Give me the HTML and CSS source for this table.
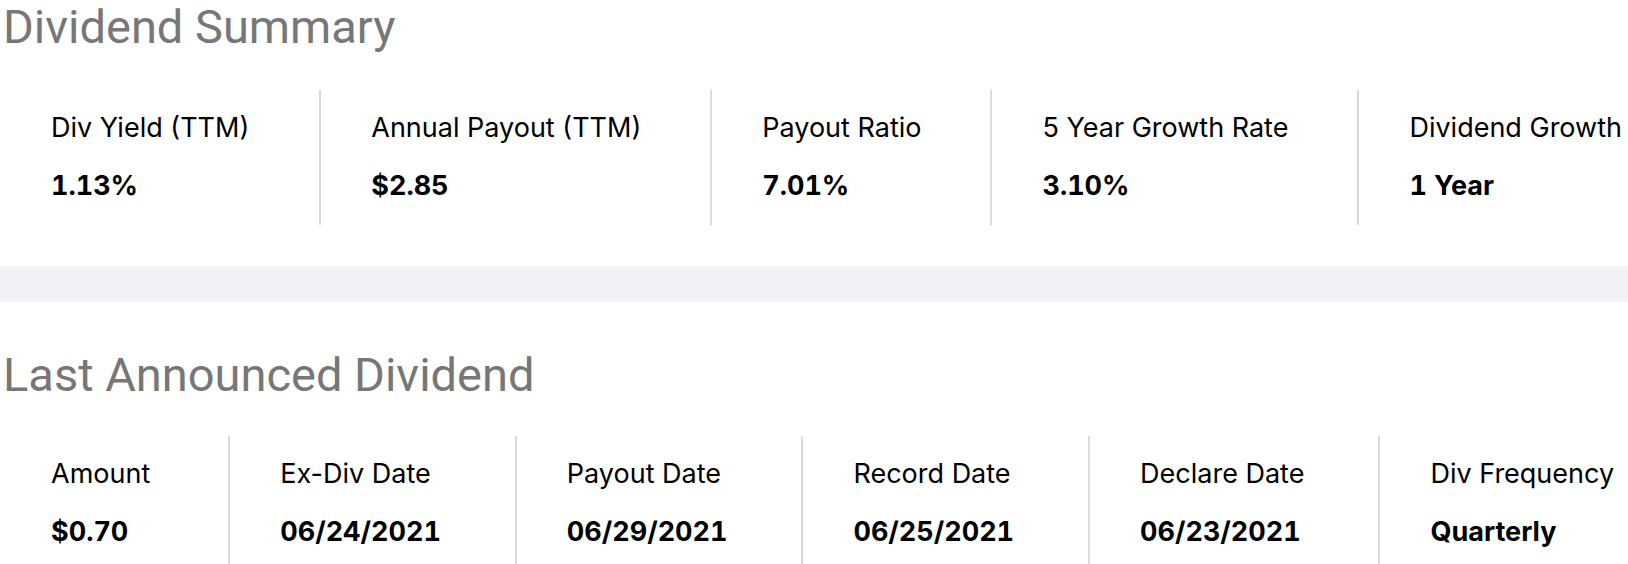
FILE: index.html
```html
<!DOCTYPE html>
<html lang="en">
<head>
<meta charset="utf-8">
<title>Dividend Summary</title>
<link rel="stylesheet" href="styles.css">
</head>
<body>
<section class="section">
  <h2 class="section-title">Dividend Summary</h2>
  <div class="stats stats-summary">
    <div class="stat"><div class="stat-label">Div Yield (TTM)</div><div class="stat-value">1.13%</div></div>
    <div class="stat"><div class="stat-label">Annual Payout (TTM)</div><div class="stat-value">$2.85</div></div>
    <div class="stat"><div class="stat-label">Payout Ratio</div><div class="stat-value">7.01%</div></div>
    <div class="stat"><div class="stat-label">5 Year Growth Rate</div><div class="stat-value">3.10%</div></div>
    <div class="stat"><div class="stat-label">Dividend Growth</div><div class="stat-value">1 Year</div></div>
  </div>
</section>
<div class="band"></div>
<section class="section section-last">
  <h2 class="section-title">Last Announced Dividend</h2>
  <div class="stats stats-last">
    <div class="stat"><div class="stat-label">Amount</div><div class="stat-value">$0.70</div></div>
    <div class="stat"><div class="stat-label">Ex-Div Date</div><div class="stat-value">06/24/2021</div></div>
    <div class="stat"><div class="stat-label">Payout Date</div><div class="stat-value">06/29/2021</div></div>
    <div class="stat"><div class="stat-label">Record Date</div><div class="stat-value">06/25/2021</div></div>
    <div class="stat"><div class="stat-label">Declare Date</div><div class="stat-value">06/23/2021</div></div>
    <div class="stat"><div class="stat-label">Div Frequency</div><div class="stat-value">Quarterly</div></div>
  </div>
</section>
</body>
</html>
```
FILE: styles.css
```css
html, body {
  margin: 0;
  padding: 0;
  background: #ffffff;
}
body {
  font-family: Inter, "Noto Sans", sans-serif;
  color: #000000;
  overflow: hidden;
}
.section-title {
  margin: 0;
  padding-left: 3px;
  font-family: Roboto, "Liberation Sans", sans-serif;
  font-weight: 400;
  font-size: 47px;
  line-height: 54px;
  color: #777777;
}
.stats {
  display: flex;
  margin-top: 36px;
}
.stats-last {
  margin-top: 34px;
}
.stat {
  padding: 22px 69px 23px 50px;
  border-left: 2px solid #dadada;
}
.stat:first-child {
  border-left: none;
  padding-left: 51px;
  padding-right: 70px;
}
.stats-last .stat {
  padding-right: 74px;
}
.stats-last .stat:first-child {
  padding-right: 78px;
}
.stat-label {
  font-size: 27px;
  line-height: 32px;
  font-weight: 400;
  white-space: nowrap;
}
.stat-value {
  margin-top: 26px;
  font-size: 27px;
  line-height: 32px;
  font-weight: 700;
  font-feature-settings: "tnum" 1;
  white-space: nowrap;
}
.band {
  margin-top: 41px;
  height: 36px;
  background: #f1f2f5;
}
.section-last {
  margin-top: 46px;
}
```
